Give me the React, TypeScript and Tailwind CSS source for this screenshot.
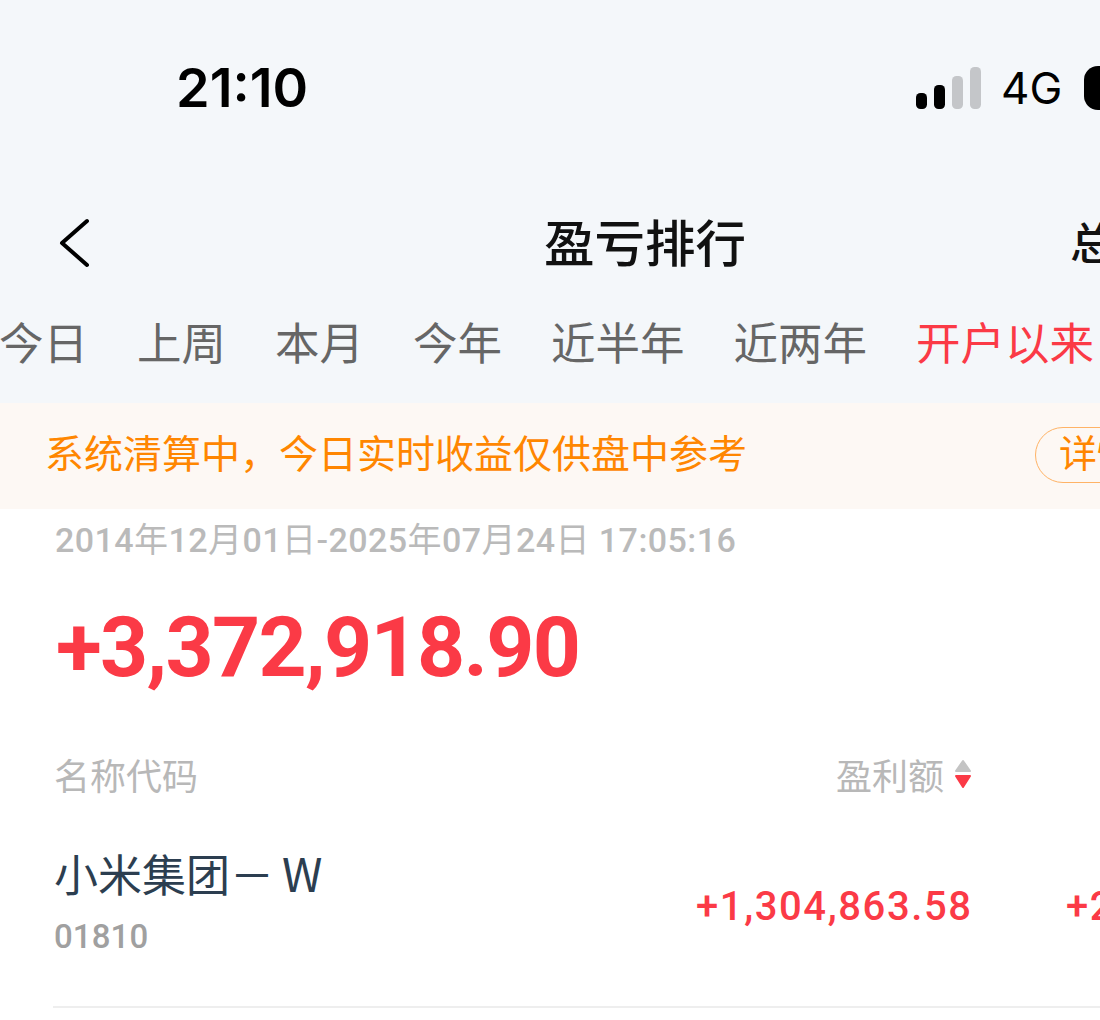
import React from 'react';

const CJK = '"Noto Sans CJK SC", sans-serif';
const NUM = 'Roboto, "Noto Sans CJK SC", sans-serif';
const TABS = ['今日', '上周', '本月', '今年', '近半年', '近两年'];

function Signal() {
  return (
    <svg width="66" height="42" viewBox="0 0 66 42" className="shrink-0">
      <rect x="0" y="26" width="11" height="16" rx="4.5" fill="#000" />
      <rect x="18" y="18" width="11" height="24" rx="4.5" fill="#000" />
      <rect x="36" y="9" width="11" height="33" rx="4.5" fill="#c4c6c9" />
      <rect x="54" y="0" width="11" height="42" rx="4.5" fill="#c4c6c9" />
    </svg>
  );
}

function SortIcon() {
  return (
    <svg width="18" height="30" viewBox="0 0 18 30" className="shrink-0 block">
      <path d="M9 2 L16 12 L2 12 Z" fill="#c4c4c4" stroke="#c4c4c4" strokeWidth="2" strokeLinejoin="round" />
      <path d="M2 17 L16 17 L9 28 Z" fill="#fb3a46" stroke="#fb3a46" strokeWidth="2" strokeLinejoin="round" />
    </svg>
  );
}

export default function App() {
  return (
    <div className="w-[1100px] h-[1020px] overflow-hidden bg-white" style={{ fontFamily: CJK }}>
      <div className="w-[1290px]">
        <div className="bg-[#f4f7fa]">
          {/* Status bar */}
          <div className="h-[175px] flex items-center pl-[176px]">
            <div className="text-[54px] leading-none font-semibold text-black w-[740px]" style={{ fontFamily: 'Inter, sans-serif' }}>
              21:10
            </div>
            <div className="flex items-center">
              <Signal />
              <div className="ml-[19px] text-[44px] leading-none text-black" style={{ fontFamily: 'Inter, sans-serif' }}>4G</div>
              <div className="ml-[22px] w-[90px] h-[44px] rounded-[14px] bg-black" />
            </div>
          </div>

          {/* Nav */}
          <div className="h-[136px] flex items-center">
            <svg width="34" height="52" viewBox="0 0 34 52" className="ml-[58px] shrink-0">
              <path d="M29 4 L4 26 L29 48" fill="none" stroke="#000" strokeWidth="4" strokeLinecap="round" strokeLinejoin="round" />
            </svg>
            <div className="ml-[452px] shrink-0 text-[50.5px] leading-none font-medium text-[#111] -mt-[6px]">盈亏排行</div>
            <div className="ml-[324px] shrink-0 text-[44px] leading-none font-medium text-[#111] -mt-[4px]">总收益</div>
          </div>

          {/* Tabs */}
          <div className="h-[92px] pt-[4px] flex items-start gap-[49px] -ml-px text-[44.5px] leading-[52px] text-[#666]">
            {TABS.map((t) => (
              <span key={t} className="shrink-0">{t}</span>
            ))}
            <span className="shrink-0 text-[#fb3a46]">开户以来</span>
          </div>
        </div>

        {/* Notice */}
        <div className="h-[106px] bg-[#fdf8f4] flex items-center pl-[45px] text-[39px] text-[#ff8600]">
          <span className="shrink-0 w-[990px] leading-none mb-[9px]">系统清算中，今日实时收益仅供盘中参考</span>
          <span className="shrink-0 h-[56px] w-[120px] rounded-full border border-[#ffb366] flex items-center pl-[23px] pb-[8px] text-[38px] leading-none mb-[2px]">详情</span>
        </div>

        {/* Summary */}
        <div className="pl-[55px]">
          <div className="h-[62px] flex items-center text-[34px] leading-none font-medium text-[#bababa] tracking-[0.44px] whitespace-pre" style={{ fontFamily: NUM }}>
            <span>2014</span><span className="font-normal">年</span><span>12</span><span className="font-normal">月</span><span>01</span><span className="font-normal">日</span><span>-2025</span><span className="font-normal">年</span><span>07</span><span className="font-normal">月</span><span>24</span><span className="font-normal">日</span><span> 17:05:16</span>
          </div>
          <div className="mt-[27px] ml-[1px] h-[100px] flex items-center text-[84px] leading-none font-bold text-[#fb3a46] tracking-[-1.7px]" style={{ fontFamily: NUM }}>
            +3,372,918.90
          </div>
        </div>

        {/* Table head */}
        <div className="mt-[44px] h-[64px] flex items-center pl-[54px] text-[36px] text-[#b8b8b8]">
          <span className="w-[782px]">名称代码</span>
          <span className="leading-none">盈利额</span>
          <span className="ml-[10px]"><SortIcon /></span>
        </div>

        {/* Row */}
        <div className="ml-[53px] h-[202px] border-b-2 border-[#eeeeee] flex items-center">
          <div className="pl-[1px] w-[643px] shrink-0 mb-[12px]">
            <div className="text-[44px] leading-[56px] text-[#2c3e50]">小米集团－<span className="ml-[8px] text-[46px]">W</span></div>
            <div className="text-[33px] leading-[40px] mt-[16px] font-medium text-[#a0a0a0] tracking-[0.1px]" style={{ fontFamily: NUM }}>01810</div>
          </div>
          <div className="text-[40px] leading-none font-medium text-[#fb3a46] w-[370px] shrink-0 mt-[2px] tracking-[1.6px]" style={{ fontFamily: NUM }}>
            +1,304,863.58
          </div>
          <div className="text-[40px] leading-none font-medium text-[#fb3a46] mt-[2px] tracking-[1.6px]" style={{ fontFamily: NUM }}>
            +2.5
          </div>
        </div>
      </div>
    </div>
  );
}
